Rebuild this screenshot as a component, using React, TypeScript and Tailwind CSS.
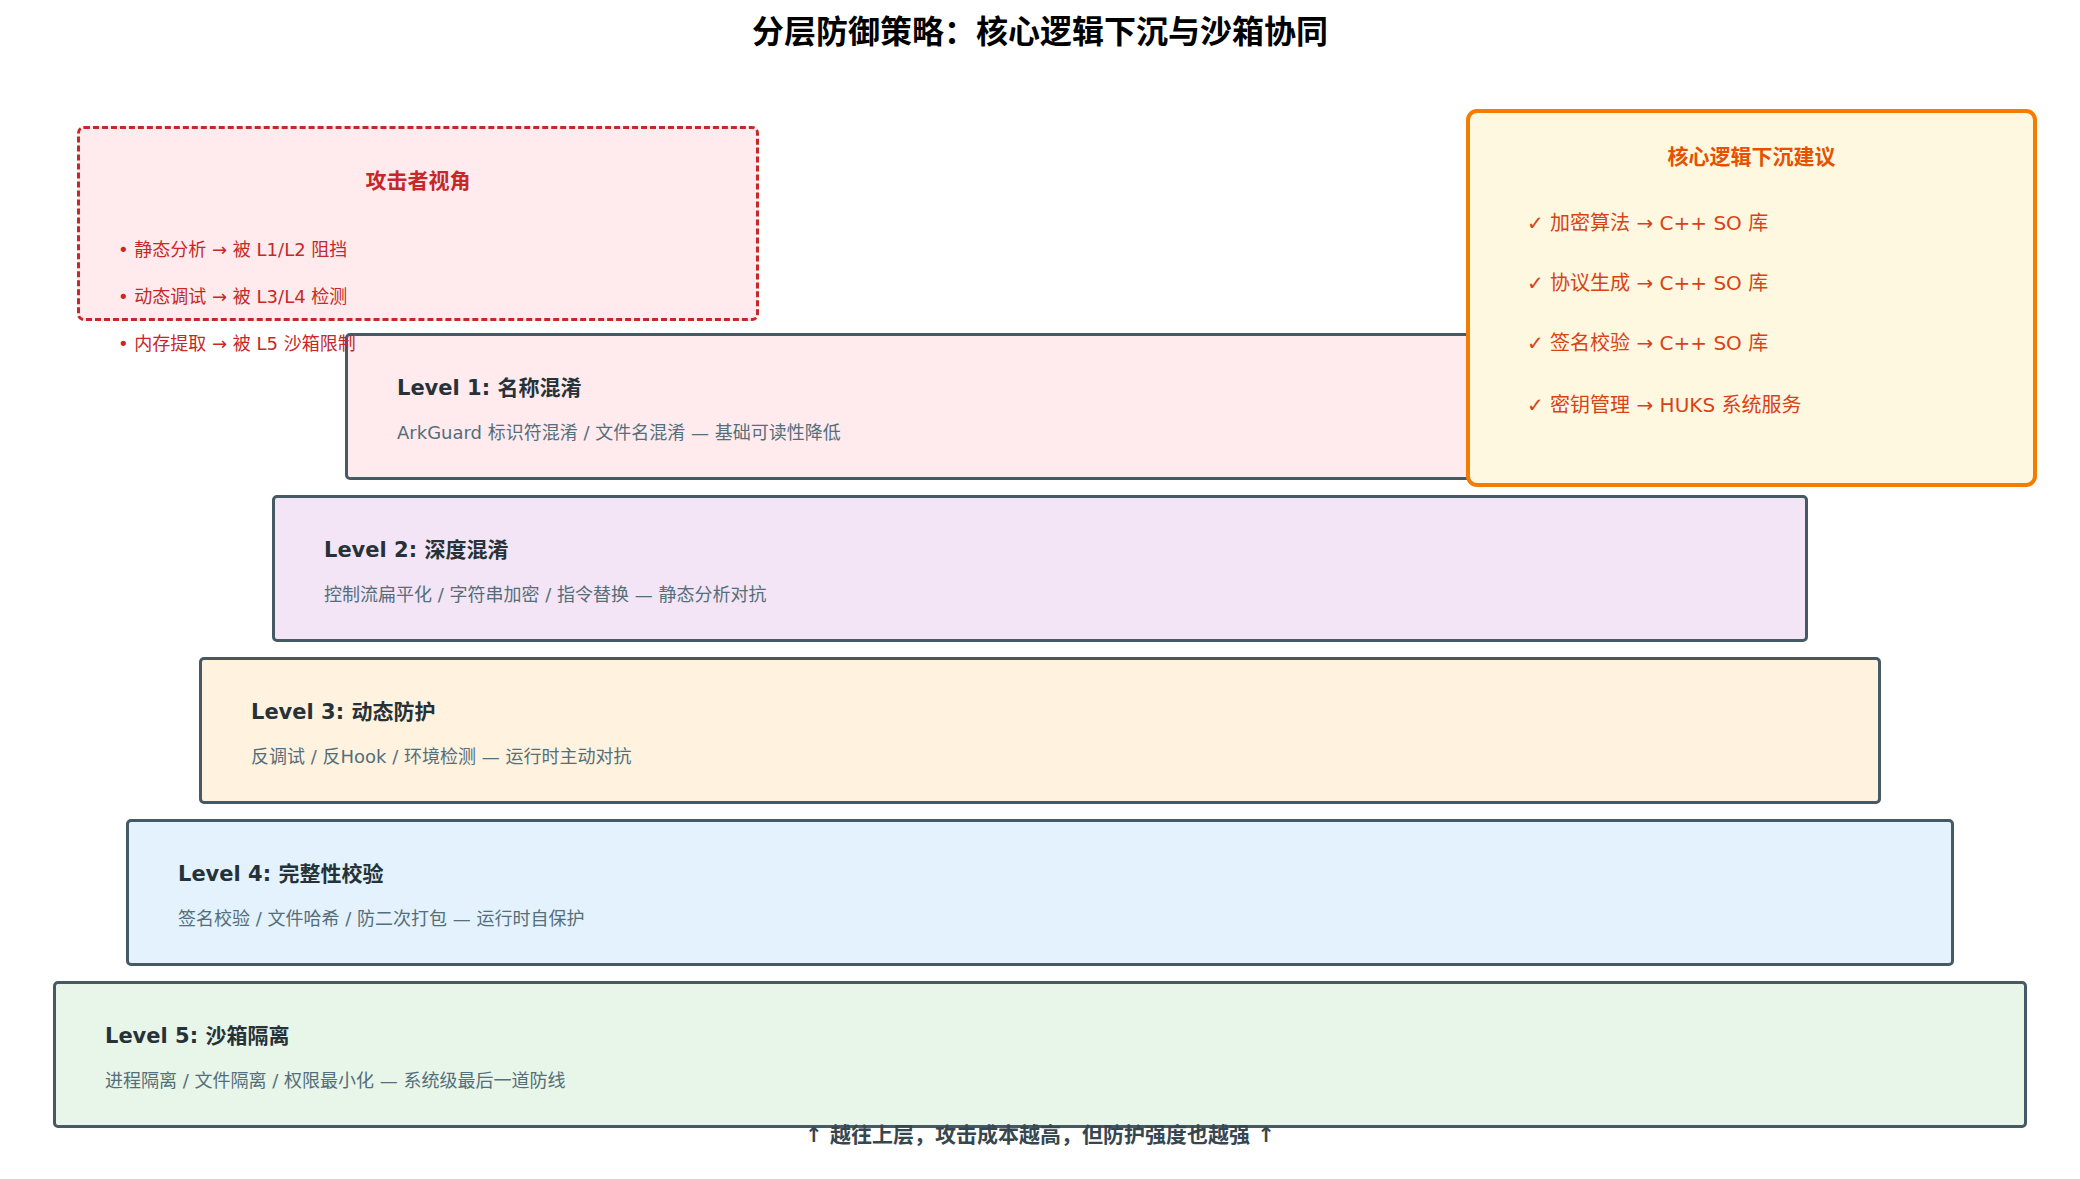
import React from "react";

const levels = [
  { t: "Level 1: 名称混淆", d: "ArkGuard 标识符混淆 / 文件名混淆 — 基础可读性降低", bg: "bg-[#ffebee]", x: "ml-[345px] w-[1390px]" },
  { t: "Level 2: 深度混淆", d: "控制流扁平化 / 字符串加密 / 指令替换 — 静态分析对抗", bg: "bg-[#f3e5f5]", x: "ml-[272px] w-[1536px]" },
  { t: "Level 3: 动态防护", d: "反调试 / 反Hook / 环境检测 — 运行时主动对抗", bg: "bg-[#fff3e0]", x: "ml-[199px] w-[1682px]" },
  { t: "Level 4: 完整性校验", d: "签名校验 / 文件哈希 / 防二次打包 — 运行时自保护", bg: "bg-[#e3f2fd]", x: "ml-[126px] w-[1828px]" },
  { t: "Level 5: 沙箱隔离", d: "进程隔离 / 文件隔离 / 权限最小化 — 系统级最后一道防线", bg: "bg-[#e8f5e9]", x: "ml-[53px] w-[1974px]" },
];

export default function App() {
  return (
    <div
      className="relative w-[2080px] h-[1179px] bg-white overflow-hidden"
      style={{ fontFamily: '"DejaVu Sans","Noto Sans CJK SC",sans-serif' }}
    >
      <div className="absolute top-[8px] left-0 right-0 text-center text-[32px] font-bold text-black">
        分层防御策略：核心逻辑下沉与沙箱协同
      </div>

      <div className="flex flex-col gap-[15px] pt-[333px]">
        {levels.map((l) => (
          <div key={l.t} className={`${l.x} ${l.bg} h-[147px] border-[3px] border-[#455a64] rounded-[5px] pl-[49px] pt-[38px]`}>
            <div className="text-[21px] font-bold text-[#263238] leading-[28px]">{l.t}</div>
            <div className="mt-[19px] text-[18px] text-[#546e7a] leading-[24px]">{l.d}</div>
          </div>
        ))}
      </div>
      <div className="-mt-[7px] text-center text-[21px] font-bold text-[#37474f] leading-[28px] relative">
        ↑ 越往上层，攻击成本越高，但防护强度也越强 ↑
      </div>

      <div className="absolute left-[77px] top-[126px] w-[682px] h-[195px] border-[3px] border-dashed border-[#c62828] bg-[#ffebee] rounded-[7px]" />
      <div className="absolute left-[77px] top-[167px] w-[682px] text-center text-[21px] font-bold text-[#c62828] leading-[28px]">
        攻击者视角
      </div>
      <div className="absolute left-[118px] top-[238px] flex flex-col gap-[23px] text-[18px] text-[#c62828] leading-[24px]">
        <div>• 静态分析 → 被 L1/L2 阻挡</div>
        <div>• 动态调试 → 被 L3/L4 检测</div>
        <div>• 内存提取 → 被 L5 沙箱限制</div>
      </div>

      <div className="absolute left-[1466px] top-[109px] w-[571px] h-[378px] border-[4px] border-[#f57c00] bg-[#fff8e1] rounded-[11px] pt-[30px]">
        <div className="text-center text-[21px] font-bold text-[#e65100] leading-[28px]">核心逻辑下沉建议</div>
        <div className="mt-[39px] pl-[57px] flex flex-col text-[20px] text-[#d84315] leading-[26px]">
          <div>✓ 加密算法 → C++ SO 库</div>
          <div className="mt-[34px]">✓ 协议生成 → C++ SO 库</div>
          <div className="mt-[34px]">✓ 签名校验 → C++ SO 库</div>
          <div className="mt-[36px]">✓ 密钥管理 → HUKS 系统服务</div>
        </div>
      </div>
    </div>
  );
}
